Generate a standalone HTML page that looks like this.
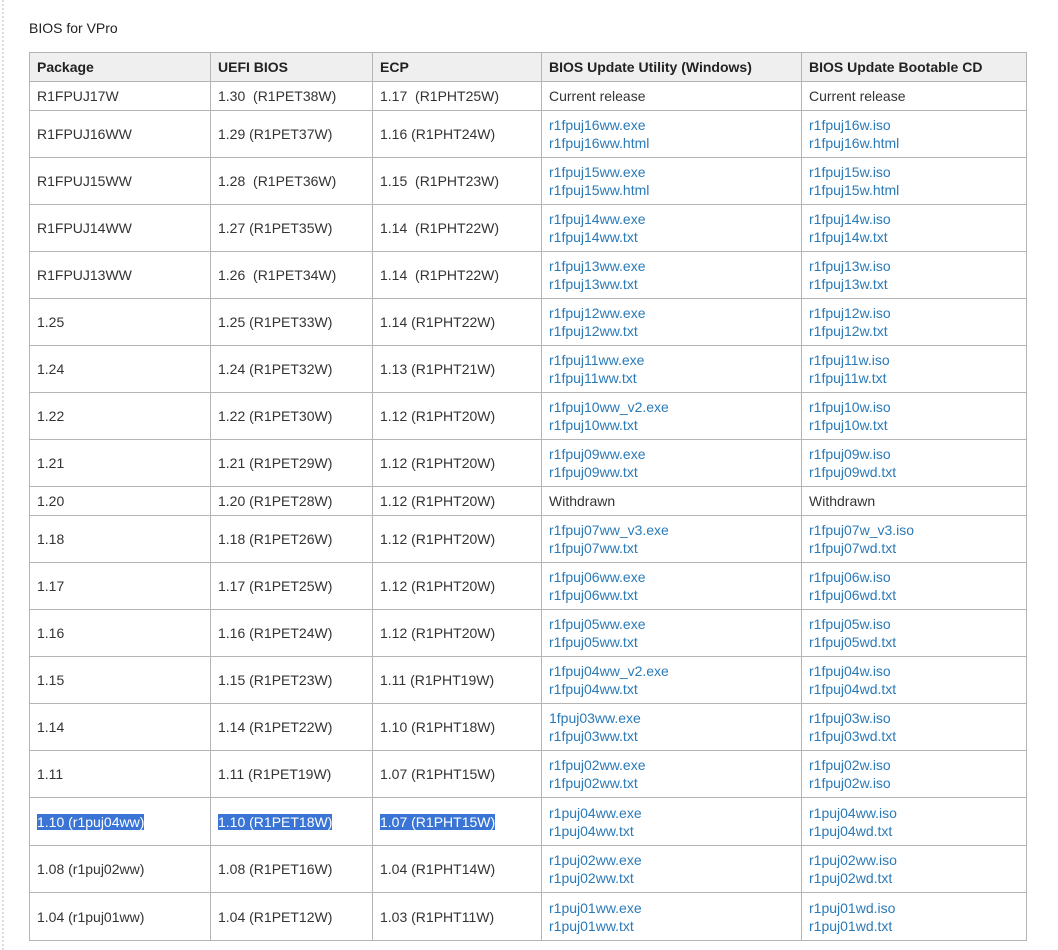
<!DOCTYPE html>
<html><head><meta charset="utf-8"><style>
html,body{margin:0;padding:0;background:#fff;}
body{width:1058px;height:950px;position:relative;overflow:hidden;font-family:"Liberation Sans",sans-serif;color:#333;font-size:14px;}
.edge{position:absolute;left:2px;top:0;width:0;height:950px;border-left:2px dotted #ddd;}
h4{position:absolute;left:29px;top:20px;margin:0;font-size:14px;font-weight:normal;color:#222;}
table{position:absolute;left:29px;top:52px;border-collapse:collapse;width:997px;table-layout:fixed;}
td,th{border:1px solid #b4b4b4;padding:0 7px;text-align:left;vertical-align:middle;line-height:18px;}
th{background:#efefef;font-weight:bold;color:#222;height:28px;}
tr.s td{height:28px;}
tr.d td{height:46px;}
tr.d2 td{height:47px;}
a{color:#2a7ab8;text-decoration:none;}
.hl{background:#3a74d4;color:#fff;}
</style></head><body>
<div class="edge"></div>
<h4>BIOS for VPro</h4>
<table>
<colgroup><col style="width:181px"><col style="width:162px"><col style="width:169px"><col style="width:260px"><col style="width:225px"></colgroup>
<tr><th>Package</th><th>UEFI BIOS</th><th>ECP</th><th>BIOS Update Utility (Windows)</th><th>BIOS Update Bootable CD</th></tr>
<tr class="s"><td>R1FPUJ17W</td><td>1.30 &nbsp;(R1PET38W)</td><td>1.17 &nbsp;(R1PHT25W)</td><td>Current release</td><td>Current release</td></tr>
<tr class="d"><td>R1FPUJ16WW</td><td>1.29 (R1PET37W)</td><td>1.16 (R1PHT24W)</td><td><a>r1fpuj16ww.exe</a><br><a>r1fpuj16ww.html</a></td><td><a>r1fpuj16w.iso</a><br><a>r1fpuj16w.html</a></td></tr>
<tr class="d"><td>R1FPUJ15WW</td><td>1.28 &nbsp;(R1PET36W)</td><td>1.15 &nbsp;(R1PHT23W)</td><td><a>r1fpuj15ww.exe</a><br><a>r1fpuj15ww.html</a></td><td><a>r1fpuj15w.iso</a><br><a>r1fpuj15w.html</a></td></tr>
<tr class="d"><td>R1FPUJ14WW</td><td>1.27 (R1PET35W)</td><td>1.14 &nbsp;(R1PHT22W)</td><td><a>r1fpuj14ww.exe</a><br><a>r1fpuj14ww.txt</a></td><td><a>r1fpuj14w.iso</a><br><a>r1fpuj14w.txt</a></td></tr>
<tr class="d"><td>R1FPUJ13WW</td><td>1.26 &nbsp;(R1PET34W)</td><td>1.14 &nbsp;(R1PHT22W)</td><td><a>r1fpuj13ww.exe</a><br><a>r1fpuj13ww.txt</a></td><td><a>r1fpuj13w.iso</a><br><a>r1fpuj13w.txt</a></td></tr>
<tr class="d"><td>1.25</td><td>1.25 (R1PET33W)</td><td>1.14 (R1PHT22W)</td><td><a>r1fpuj12ww.exe</a><br><a>r1fpuj12ww.txt</a></td><td><a>r1fpuj12w.iso</a><br><a>r1fpuj12w.txt</a></td></tr>
<tr class="d"><td>1.24</td><td>1.24 (R1PET32W)</td><td>1.13 (R1PHT21W)</td><td><a>r1fpuj11ww.exe</a><br><a>r1fpuj11ww.txt</a></td><td><a>r1fpuj11w.iso</a><br><a>r1fpuj11w.txt</a></td></tr>
<tr class="d"><td>1.22</td><td>1.22 (R1PET30W)</td><td>1.12 (R1PHT20W)</td><td><a>r1fpuj10ww_v2.exe</a><br><a>r1fpuj10ww.txt</a></td><td><a>r1fpuj10w.iso</a><br><a>r1fpuj10w.txt</a></td></tr>
<tr class="d"><td>1.21</td><td>1.21 (R1PET29W)</td><td>1.12 (R1PHT20W)</td><td><a>r1fpuj09ww.exe</a><br><a>r1fpuj09ww.txt</a></td><td><a>r1fpuj09w.iso</a><br><a>r1fpuj09wd.txt</a></td></tr>
<tr class="s"><td>1.20</td><td>1.20 (R1PET28W)</td><td>1.12 (R1PHT20W)</td><td>Withdrawn</td><td>Withdrawn</td></tr>
<tr class="d"><td>1.18</td><td>1.18 (R1PET26W)</td><td>1.12 (R1PHT20W)</td><td><a>r1fpuj07ww_v3.exe</a><br><a>r1fpuj07ww.txt</a></td><td><a>r1fpuj07w_v3.iso</a><br><a>r1fpuj07wd.txt</a></td></tr>
<tr class="d"><td>1.17</td><td>1.17 (R1PET25W)</td><td>1.12 (R1PHT20W)</td><td><a>r1fpuj06ww.exe</a><br><a>r1fpuj06ww.txt</a></td><td><a>r1fpuj06w.iso</a><br><a>r1fpuj06wd.txt</a></td></tr>
<tr class="d"><td>1.16</td><td>1.16 (R1PET24W)</td><td>1.12 (R1PHT20W)</td><td><a>r1fpuj05ww.exe</a><br><a>r1fpuj05ww.txt</a></td><td><a>r1fpuj05w.iso</a><br><a>r1fpuj05wd.txt</a></td></tr>
<tr class="d"><td>1.15</td><td>1.15 (R1PET23W)</td><td>1.11 (R1PHT19W)</td><td><a>r1fpuj04ww_v2.exe</a><br><a>r1fpuj04ww.txt</a></td><td><a>r1fpuj04w.iso</a><br><a>r1fpuj04wd.txt</a></td></tr>
<tr class="d"><td>1.14</td><td>1.14 (R1PET22W)</td><td>1.10 (R1PHT18W)</td><td><a>1fpuj03ww.exe</a><br><a>r1fpuj03ww.txt</a></td><td><a>r1fpuj03w.iso</a><br><a>r1fpuj03wd.txt</a></td></tr>
<tr class="d"><td>1.11</td><td>1.11 (R1PET19W)</td><td>1.07 (R1PHT15W)</td><td><a>r1fpuj02ww.exe</a><br><a>r1fpuj02ww.txt</a></td><td><a>r1fpuj02w.iso</a><br><a>r1fpuj02w.iso</a></td></tr>
<tr class="d2"><td><span class="hl">1.10 (r1puj04ww)</span></td><td><span class="hl">1.10 (R1PET18W)</span></td><td><span class="hl">1.07 (R1PHT15W)</span></td><td><a>r1puj04ww.exe</a><br><a>r1puj04ww.txt</a></td><td><a>r1puj04ww.iso</a><br><a>r1puj04wd.txt</a></td></tr>
<tr class="d"><td>1.08 (r1puj02ww)</td><td>1.08 (R1PET16W)</td><td>1.04 (R1PHT14W)</td><td><a>r1puj02ww.exe</a><br><a>r1puj02ww.txt</a></td><td><a>r1puj02ww.iso</a><br><a>r1puj02wd.txt</a></td></tr>
<tr class="d2"><td>1.04 (r1puj01ww)</td><td>1.04 (R1PET12W)</td><td>1.03 (R1PHT11W)</td><td><a>r1puj01ww.exe</a><br><a>r1puj01ww.txt</a></td><td><a>r1puj01wd.iso</a><br><a>r1puj01wd.txt</a></td></tr>
</table>
</body></html>
